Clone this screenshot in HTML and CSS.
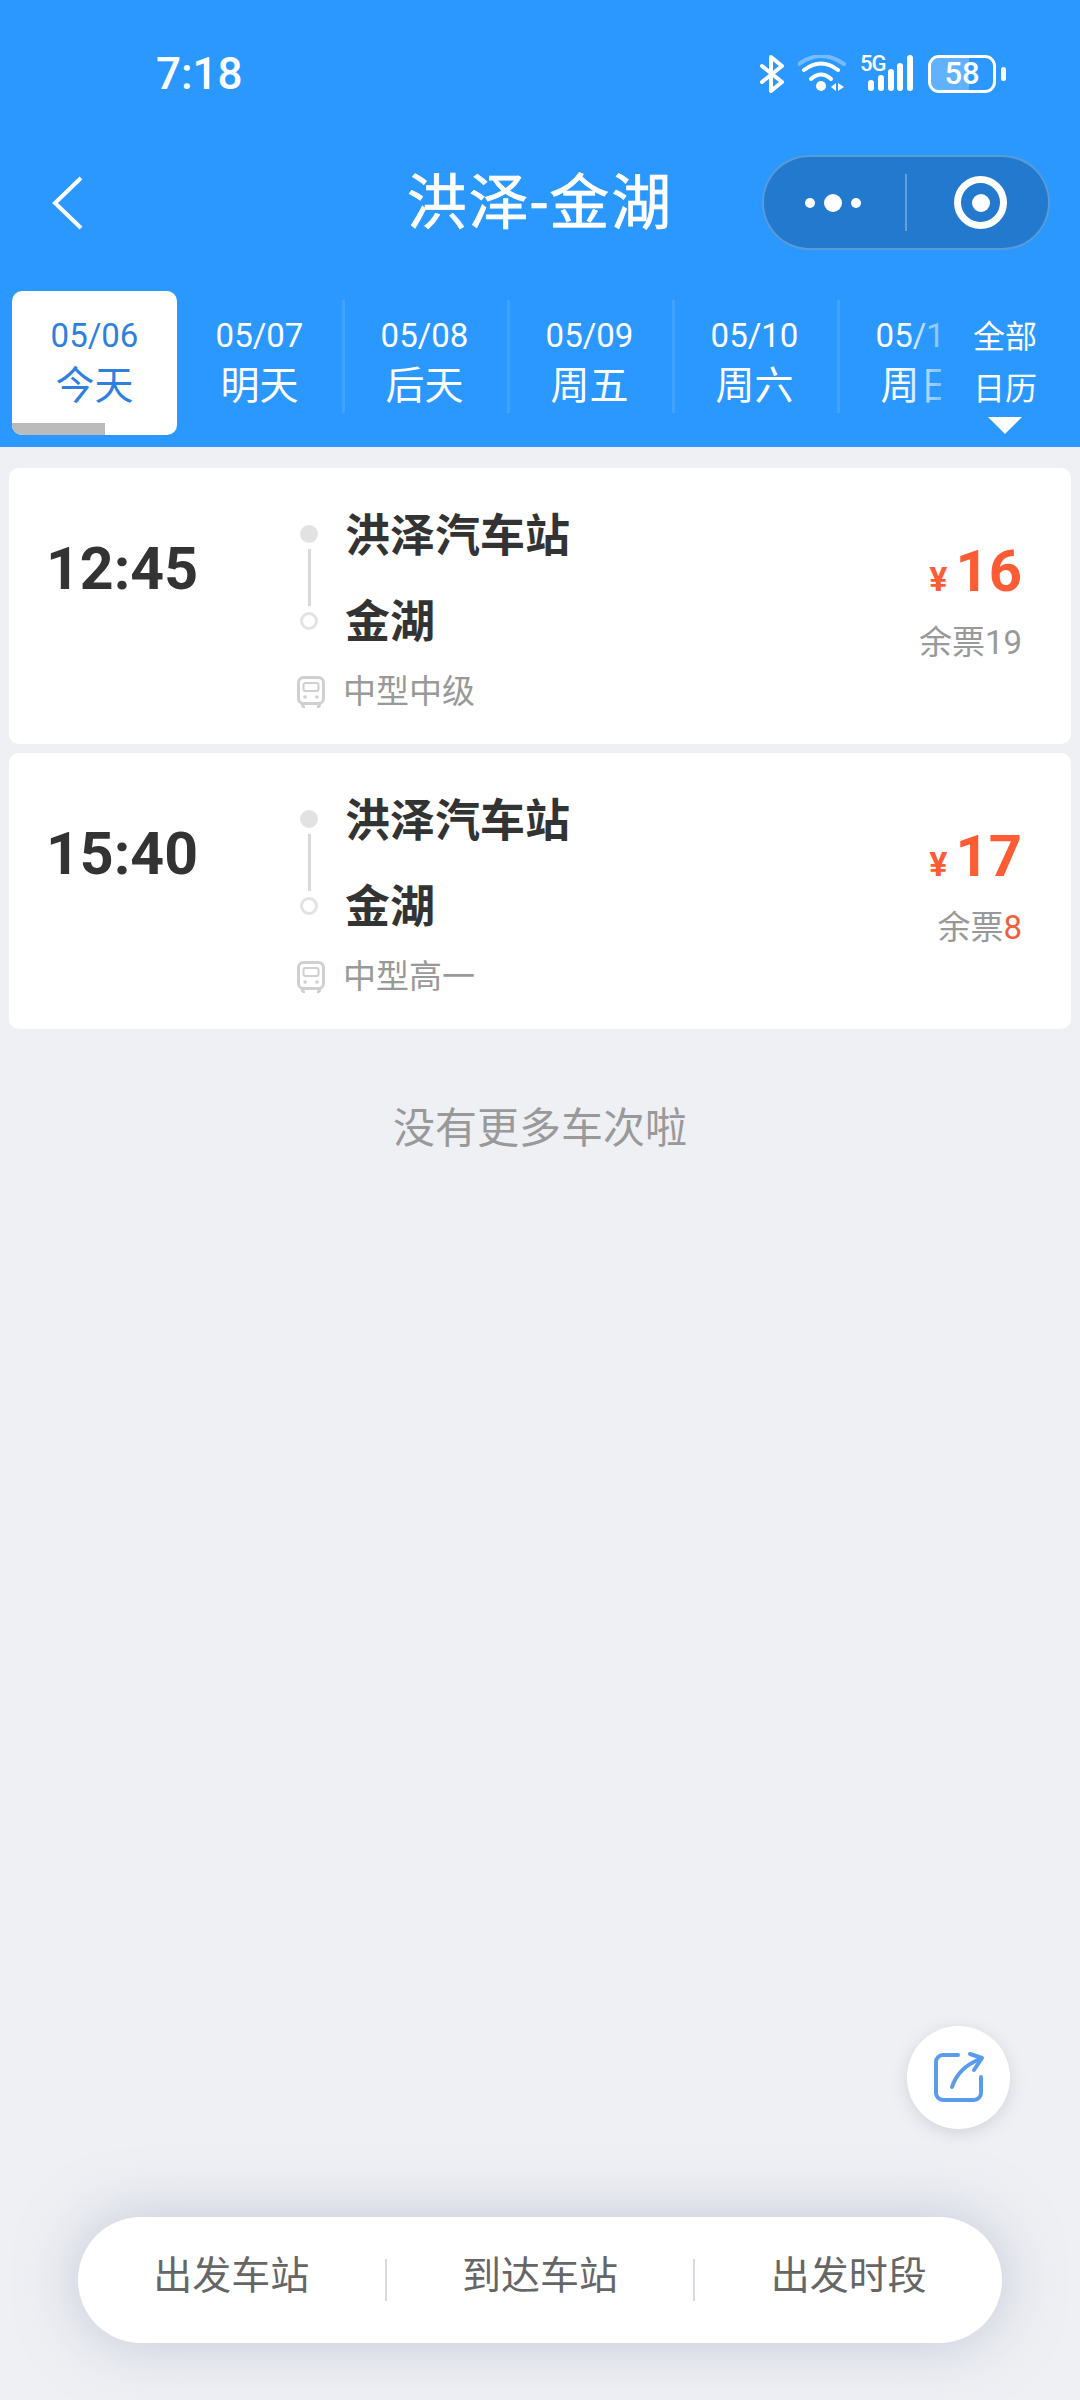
FILE: index.html
```html
<!DOCTYPE html>
<html lang="zh-CN">
<head>
  <meta charset="UTF-8">
  <meta name="viewport" content="width=device-width, initial-scale=1.0">
  <title>洪泽-金湖</title>
  <link rel="stylesheet" href="styles.css">
</head>
<body>
  <div class="page">
    <header class="header">
      <div class="status">
        <span class="clock">7:18</span>
        <div class="status-icons">
          <svg class="ic-bt" width="24" height="38" viewBox="0 0 24 38">
            <path d="M2 11 L22 27 L11 36 V2 L22 11 L2 27" fill="none" stroke="#fff" stroke-width="4" stroke-linejoin="round" stroke-linecap="round"/>
          </svg>
          <svg class="ic-wifi" width="48" height="38" viewBox="0 0 48 38">
            <path d="M1 9 Q23 -7 46 9" fill="none" stroke="#fff" stroke-opacity=".35" stroke-width="4" stroke-linecap="round"/>
            <path d="M6 15 Q23 2 40 15" fill="none" stroke="#fff" stroke-width="4" stroke-linecap="round"/>
            <path d="M13 24 Q23 15 33 24" fill="none" stroke="#fff" stroke-width="4" stroke-linecap="round"/>
            <circle cx="23" cy="31" r="5" fill="#fff"/>
            <path d="M38 28 L33 32 L38 36Z M40 28 L46 32 L40 36Z" fill="#fff"/>
          </svg>
          <div class="signal">
            <span class="five-g">5G</span>
            <svg width="54" height="38" viewBox="0 0 54 38">
              <rect x="8" y="25" width="6" height="11" rx="3" fill="#fff"/>
              <rect x="18" y="20" width="6" height="16" rx="3" fill="#fff"/>
              <rect x="28" y="14" width="6" height="22" rx="3" fill="#fff"/>
              <rect x="37" y="8" width="6" height="28" rx="3" fill="#fff"/>
              <rect x="47" y="0" width="6" height="36" rx="3" fill="#fff"/>
            </svg>
          </div>
          <div class="battery"><span class="battery-fill"></span><span class="battery-num">58</span></div>
          <span class="battery-nub"></span>
        </div>
      </div>

      <div class="nav">
        <svg class="back" width="32" height="54" viewBox="0 0 32 54">
          <path d="M29 2 L3 27 L29 52" fill="none" stroke="#fff" stroke-width="4"/>
        </svg>
        <h1 class="title">洪泽-金湖</h1>
        <div class="capsule">
          <div class="capsule-dots"><i class="dot"></i><i class="dot big"></i><i class="dot"></i></div>
          <div class="capsule-target"><i></i></div>
        </div>
      </div>

      <div class="dates">
        <div class="date active"><span class="d">05/06</span><span class="w">今天</span><b class="progress"></b></div>
        <div class="date"><span class="d">05/07</span><span class="w">明天</span></div>
        <div class="date"><span class="d">05/08</span><span class="w">后天</span></div>
        <div class="date"><span class="d">05/09</span><span class="w">周五</span></div>
        <div class="date"><span class="d">05/10</span><span class="w">周六</span></div>
        <div class="date"><span class="d">05/11</span><span class="w">周日</span></div>
        <div class="calendar">
          <span>全部</span>
          <span>日历</span>
          <i class="arrow"></i>
        </div>
      </div>
    </header>

    <main class="list">
      <div class="card">
        <div class="time">12:45</div>
        <div class="route">
          <div class="route-top">
            <div class="axis"><i class="start"></i><i class="line"></i><i class="end"></i></div>
            <div class="stations">
              <div class="station">洪泽汽车站</div>
              <div class="station">金湖</div>
            </div>
          </div>
          <div class="meta">
            <svg class="bus" width="28" height="32" viewBox="0 0 28 32">
              <rect x="1.5" y="1.5" width="25" height="26" rx="5" fill="none" stroke="#d0d0d0" stroke-width="3"/>
              <rect x="6.5" y="7" width="15" height="8" rx="2" fill="none" stroke="#d0d0d0" stroke-width="2"/>
              <circle cx="8" cy="21" r="1.8" fill="#d0d0d0"/>
              <circle cx="20" cy="21" r="1.8" fill="#d0d0d0"/>
              <path d="M5 28 Q5 31 8 31 M23 28 Q23 31 20 31" fill="none" stroke="#d0d0d0" stroke-width="2.5"/>
            </svg>
            <span>中型中级</span>
          </div>
        </div>
        <div class="price-box">
          <div class="price"><span class="yen">¥</span>16</div>
          <div class="stock">余票19</div>
        </div>
      </div>

      <div class="card">
        <div class="time">15:40</div>
        <div class="route">
          <div class="route-top">
            <div class="axis"><i class="start"></i><i class="line"></i><i class="end"></i></div>
            <div class="stations">
              <div class="station">洪泽汽车站</div>
              <div class="station">金湖</div>
            </div>
          </div>
          <div class="meta">
            <svg class="bus" width="28" height="32" viewBox="0 0 28 32">
              <rect x="1.5" y="1.5" width="25" height="26" rx="5" fill="none" stroke="#d0d0d0" stroke-width="3"/>
              <rect x="6.5" y="7" width="15" height="8" rx="2" fill="none" stroke="#d0d0d0" stroke-width="2"/>
              <circle cx="8" cy="21" r="1.8" fill="#d0d0d0"/>
              <circle cx="20" cy="21" r="1.8" fill="#d0d0d0"/>
              <path d="M5 28 Q5 31 8 31 M23 28 Q23 31 20 31" fill="none" stroke="#d0d0d0" stroke-width="2.5"/>
            </svg>
            <span>中型高一</span>
          </div>
        </div>
        <div class="price-box">
          <div class="price"><span class="yen">¥</span>17</div>
          <div class="stock">余票<em>8</em></div>
        </div>
      </div>

      <p class="no-more">没有更多车次啦</p>
    </main>

    <button class="share">
      <svg width="60" height="60" viewBox="0 0 60 60" fill="none" stroke="#5b9bec" stroke-width="4" stroke-linecap="round" stroke-linejoin="round">
        <path d="M29 7 H14 a7 7 0 0 0 -7 7 V45 a7 7 0 0 0 7 7 H45 a7 7 0 0 0 7 -7 V29"/>
        <path d="M23 39 Q29 20 51 11"/>
        <path d="M41 6 L53 10 L45 22"/>
      </svg>
    </button>

    <nav class="filters">
      <div class="filter">出发车站</div>
      <div class="filter">到达车站</div>
      <div class="filter">出发时段</div>
    </nav>
  </div>
</body>
</html>
```

FILE: styles.css
```css
* {
  box-sizing: border-box;
}

body {
  margin: 0;
  font-family: Roboto, "Noto Sans CJK SC", sans-serif;
  background: #eff0f4;
}

.page {
  position: relative;
  width: 1080px;
  height: 2400px;
  overflow: hidden;
  background: #eff0f4;
}

/* header */
.header {
  background: #2b98ff;
  color: #fff;
  height: 447px;
}

.status {
  display: flex;
  justify-content: space-between;
  align-items: center;
  height: 155px;
  padding: 0 74px 8px 156px;
}

.clock {
  font-size: 44px;
  font-weight: 500;
}

.status-icons {
  display: flex;
  align-items: center;
  gap: 14px;
}

.signal {
  position: relative;
  display: flex;
}

.five-g {
  position: absolute;
  left: 0;
  top: -2px;
  font-size: 22px;
  font-weight: 500;
  line-height: 22px;
  letter-spacing: -1px;
}

.battery {
  position: relative;
  width: 68px;
  height: 38px;
  border: 3px solid #fff;
  border-radius: 11px;
  overflow: hidden;
  display: flex;
  align-items: center;
  justify-content: center;
}

.battery-fill {
  position: absolute;
  left: 0;
  top: 0;
  bottom: 0;
  width: 38px;
  background: rgba(255, 255, 255, 0.25);
}

.battery-num {
  position: relative;
  font-size: 31px;
  font-weight: 500;
  line-height: 1;
}

.battery-nub {
  width: 5px;
  height: 14px;
  margin-left: -9px;
  border-radius: 3px;
  background: #fff;
}

.nav {
  display: grid;
  grid-template-columns: 1fr auto 1fr;
  align-items: center;
  height: 95px;
  padding: 0 30px;
}

.back {
  margin-left: 22px;
}

.title {
  margin: 0;
  padding-top: 2px;
  font-size: 60px;
  font-weight: 400;
  letter-spacing: 2px;
  line-height: 93px;
  -webkit-text-stroke: 0.7px #fff;
}

.capsule {
  justify-self: end;
  display: flex;
  align-items: center;
  width: 288px;
  height: 95px;
  background: #2279cd;
  border: 2px solid rgba(255, 255, 255, 0.25);
  border-radius: 48px;
}

.capsule-dots {
  display: flex;
  align-items: center;
  justify-content: center;
  gap: 9px;
  width: 143px;
  height: 57px;
  padding-right: 3px;
  border-right: 2px solid rgba(255, 255, 255, 0.3);
}

.dot {
  width: 10px;
  height: 10px;
  border-radius: 50%;
  background: #fff;
}

.dot.big {
  width: 18px;
  height: 18px;
}

.capsule-target {
  flex: 1;
  display: flex;
  align-items: center;
  justify-content: center;
  padding-left: 6px;
}

.capsule-target i {
  display: flex;
  align-items: center;
  justify-content: center;
  width: 53px;
  height: 53px;
  border: 7px solid #fff;
  border-radius: 50%;
}

.capsule-target i::after {
  content: "";
  width: 18px;
  height: 18px;
  border-radius: 50%;
  background: #fff;
}

/* date tabs */
.dates {
  position: relative;
  display: flex;
  height: 144px;
  margin-top: 41px;
  padding-left: 12px;
  overflow: hidden;
}

.date {
  position: relative;
  flex: none;
  display: flex;
  flex-direction: column;
  align-items: center;
  width: 165px;
  padding-top: 21px;
  border-radius: 10px;
}

.date + .date + .date::before {
  content: "";
  position: absolute;
  left: 0;
  top: 9px;
  width: 3px;
  height: 113px;
  background: rgba(255, 255, 255, 0.1);
}

.date .d {
  font-size: 33px;
  line-height: 48px;
}

.date .w {
  font-size: 39px;
  line-height: 52px;
}

.date.active {
  background: #fff;
  color: #2f7fe0;
  overflow: hidden;
}

.progress {
  position: absolute;
  left: 0;
  bottom: 0;
  width: 93px;
  height: 12px;
  background: #bbb;
}

.calendar {
  position: absolute;
  right: 0;
  top: 0;
  bottom: 0;
  width: 139px;
  display: flex;
  flex-direction: column;
  align-items: center;
  padding: 20px 11px 0 0;
  background: #2b98ff;
  font-size: 32px;
  line-height: 52px;
}

.calendar::before {
  content: "";
  position: absolute;
  right: 100%;
  top: 0;
  bottom: 0;
  width: 40px;
  background: linear-gradient(to right, rgba(43, 152, 255, 0), rgba(43, 152, 255, 0.6));
}

.arrow {
  width: 0;
  height: 0;
  margin-top: 2px;
  border-left: 17px solid transparent;
  border-right: 17px solid transparent;
  border-top: 17px solid #fff;
}

/* list */
.list {
  padding: 21px 9px 0;
}

.card {
  display: flex;
  height: 276px;
  margin-bottom: 9px;
  background: #fff;
  border-radius: 10px;
}

.time {
  flex: none;
  width: 288px;
  padding: 60px 0 0 37px;
  font-size: 59px;
  font-weight: 700;
  line-height: 82px;
  color: #333;
}

.route {
  padding-top: 39px;
}

.route-top {
  display: flex;
}

.axis {
  display: flex;
  flex-direction: column;
  align-items: center;
  width: 24px;
  margin: 18px 24px 0 0;
}

.axis i {
  display: block;
}

.axis .start {
  width: 18px;
  height: 18px;
  border-radius: 50%;
  background: #e2e2e2;
}

.axis .line {
  width: 3px;
  height: 57px;
  margin: 6px 0;
  background: #d8d8dc;
}

.axis .end {
  width: 18px;
  height: 18px;
  border: 3px solid #e2e2e2;
  border-radius: 50%;
}

.station {
  font-size: 45px;
  font-weight: 700;
  line-height: 60px;
  color: #333;
}

.station + .station {
  margin-top: 26px;
}

.meta {
  display: flex;
  align-items: center;
  margin-top: 19px;
  font-size: 33px;
  line-height: 40px;
  color: #999;
}

.bus {
  margin-right: 18px;
}

.price-box {
  margin-left: auto;
  padding: 68px 49px 0 0;
  text-align: right;
}

.price {
  font-size: 58px;
  font-weight: 700;
  line-height: 70px;
  color: #ff5b35;
}

.yen {
  margin-right: 8px;
  font-size: 34px;
}

.stock {
  margin-top: 9px;
  font-size: 33px;
  line-height: 40px;
  color: #999;
}

.stock em {
  font-style: normal;
  color: #f0603c;
}

.no-more {
  margin: 70px 0 0;
  font-size: 42px;
  line-height: 60px;
  text-align: center;
  color: #999;
}

/* floating */
.share {
  position: absolute;
  left: 907px;
  top: 2026px;
  display: flex;
  align-items: center;
  justify-content: center;
  width: 103px;
  height: 103px;
  padding: 0;
  border: none;
  border-radius: 50%;
  background: #fff;
  box-shadow: 0 4px 16px rgba(120, 130, 150, 0.25);
}

.filters {
  position: absolute;
  left: 78px;
  top: 2217px;
  display: flex;
  align-items: center;
  width: 924px;
  height: 126px;
  background: #fff;
  border-radius: 63px;
  box-shadow: 0 0 60px rgba(150, 160, 185, 0.5);
}

.filter {
  flex: 1;
  height: 42px;
  font-size: 39px;
  line-height: 34px;
  text-align: center;
  color: #666;
}

.filter + .filter {
  border-left: 2px solid #d5dae2;
}
```
